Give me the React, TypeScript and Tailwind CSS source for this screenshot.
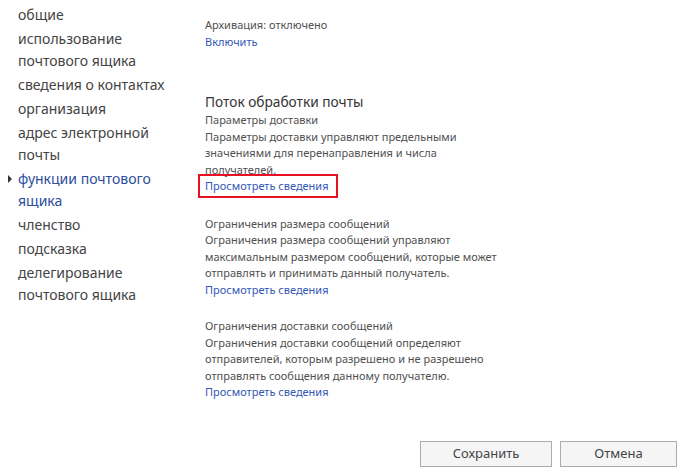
const navItems = [
  { label: 'общие' },
  { label: 'использование почтового ящика' },
  { label: 'сведения о контактах' },
  { label: 'организация' },
  { label: 'адрес электронной почты' },
  { label: 'функции почтового ящика', active: true },
  { label: 'членство' },
  { label: 'подсказка' },
  { label: 'делегирование почтового ящика' },
];

const sections = [
  {
    title: 'Ограничения размера сообщений',
    text: 'Ограничения размера сообщений управляют максимальным размером сообщений, которые может отправлять и принимать данный получатель.',
  },
  {
    title: 'Ограничения доставки сообщений',
    text: 'Ограничения доставки сообщений определяют отправителей, которым разрешено и не разрешено отправлять сообщения данному получателю.',
  },
];

export default function App() {
  return (
    <div
      className="w-[688px] h-[476px] bg-white flex flex-col overflow-hidden"
      style={{ fontFamily: '"Noto Sans", "Open Sans", sans-serif' }}
    >
      <div className="flex flex-1">
        <nav className="w-[180px] pl-[18px] pt-[4px] flex flex-col gap-[2px] text-[14px] leading-[22px] text-[#444]">
          {navItems.map((item) => (
            <div key={item.label} className="relative">
              {item.active && (
                <span className="absolute left-[-10px] top-[7px] w-0 h-0 border-y-[4px] border-y-transparent border-l-[4px] border-l-[#333]" />
              )}
              <span className={item.active ? 'text-[#2b4d9c]' : ''}>{item.label}</span>
            </div>
          ))}
        </nav>

        <main className="w-[300px] ml-[25px] pt-[17px] text-[11px] leading-[16.5px] text-[#505050]">
          <div>Архивация: отключено</div>
          <a className="text-[#3557b7] block">Включить</a>

          <h2 className="mt-[42px] text-[13.7px] leading-[20px] text-[#333]">Поток обработки почты</h2>
          <div>Параметры доставки</div>
          <div>
            Параметры доставки управляют предельными значениями для перенаправления и числа получателей.
          </div>
          <a className="inline-block relative text-[#3557b7] outline-2 outline-[#e81123] -ml-[5px] pl-[5px] pr-[7px] -mt-[3px] pt-[2px] pb-[1px]">
            Просмотреть сведения
          </a>

          {sections.map((s) => (
            <div key={s.title} className="mt-[20px]">
              <div>{s.title}</div>
              <div>{s.text}</div>
              <a className="block text-[#3557b7]">Просмотреть сведения</a>
            </div>
          ))}
        </main>
      </div>

      <div className="flex justify-end gap-[8px] pr-[11px] pb-[9px]">
        <button className="w-[132px] h-[26px] border border-[#acacac] bg-[#f5f5f5] text-[13px] text-[#444]">
          Сохранить
        </button>
        <button className="w-[117px] h-[26px] border border-[#acacac] bg-[#f5f5f5] text-[13px] text-[#444]">
          Отмена
        </button>
      </div>
    </div>
  );
}
